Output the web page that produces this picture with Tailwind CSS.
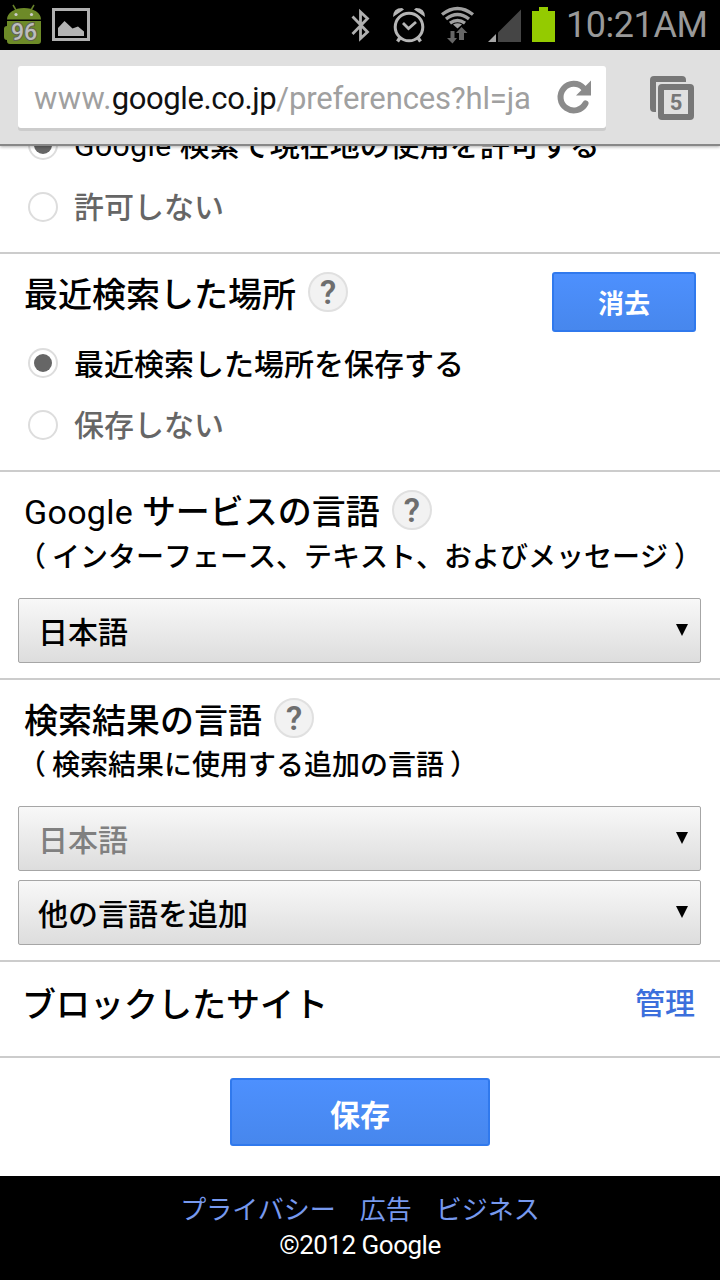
<!DOCTYPE html>
<html lang="ja">
<head>
    <meta charset="UTF-8">
    <meta name="viewport" content="width=device-width, initial-scale=1.0">
    <title>検索設定</title>
    <script src="https://cdn.jsdelivr.net/npm/@tailwindcss/browser@4"></script>
</head>
<body class="w-[720px] h-[1280px] overflow-hidden flex flex-col bg-white text-black font-['Roboto','Noto_Sans_CJK_JP',sans-serif]">
    <!-- Status bar -->
    <div class="h-[50px] shrink-0 bg-black flex items-start">
        <svg class="shrink-0" width="100" height="50" viewBox="0 0 100 50">
            <path d="M13 5l3 5M34 5l-3 5" stroke="#66802a" stroke-width="1.5"/>
            <path d="M7 19.500a17 11.500 0 0 1 34 0z" fill="#6d8a28"/>
            <path d="M7 21h34v20a3 3 0 0 1-3 3H10a3 3 0 0 1-3-3v-1q-3 0-3-3v-8q0-3 3-3z" fill="#6d8a28"/>
            <circle cx="16" cy="14.500" r="1.600" fill="#ccc"/>
            <circle cx="31.500" cy="14.500" r="1.600" fill="#ccc"/>
            <text x="24" y="39.500" text-anchor="middle" font-family="Roboto" font-weight="500" font-size="23" fill="#bdbdbd" stroke="#5f6250" stroke-width="2" paint-order="stroke">96</text>
            <rect x="53.500" y="9.500" width="35" height="30" fill="none" stroke="#b0b0b0" stroke-width="3"/>
            <path d="M58 36v-8l6.500-7 8 7.500 5.500-2 6 5v4.500z" fill="#b3b3b3"/>
        </svg>
        <div class="flex-1"></div>
        <svg class="shrink-0" width="220" height="50" viewBox="340 0 220 50">
            <path d="M352.500 16.500l15 15.500-7 6.500V12l7 6.500-15 15.500" fill="none" stroke="#b0b0b0" stroke-width="2.800"/>
            <circle cx="409" cy="27" r="13.800" fill="none" stroke="#b5b5b5" stroke-width="3"/>
            <path d="M403 23l5.500 5.500 7.500-6.500" fill="none" stroke="#b5b5b5" stroke-width="2.800"/>
            <path d="M393 17q0-9 9-9l2 1.500zM425 17q0-9-9-9l-2 1.500z" fill="#b5b5b5"/>
            <path d="M400.500 37l-3 4.500M417.500 37l3 4.500" stroke="#b5b5b5" stroke-width="3.400"/>
            <g fill="none" stroke="#a0a0a0" stroke-width="3.400">
                <path d="M442 14.500q15.500-12 31 0"/>
                <path d="M446 19q11.500-9 23 0"/>
                <path d="M450 23.200q7.500-5.500 15 0"/>
            </g>
            <path d="M453 24.500q4.500-2.500 9 0l-4.500 4z" fill="#a0a0a0"/>
            <path d="M450.500 31h4v7h2.500l-4.500 5.500-5.500-5.500h3.500zM459 40v-7h-3l5.500-6 6 6h-3.500v7z" fill="#666"/>
            <path d="M488 42l8-8v8z" fill="#a5a5a5"/>
            <path d="M498 42V32.500L521 9.500V42z" fill="#454545"/>
            <path d="M532 42V11h7V7h9v4h7v31z" fill="#94cb00"/>
        </svg>
        <div class="w-[160px] pl-[6px] pt-[2px] text-[36px] leading-[47px] font-normal tracking-[-0.45px] text-[#999999] whitespace-nowrap">10:21AM</div>
    </div>

    <!-- Browser toolbar -->
    <header class="h-24 shrink-0 bg-[#e0e0e0] border-b-2 border-[#888888] pt-4 pl-[18px] flex items-start shadow-[0_1px_3px_rgba(0,0,0,0.3)] z-10">
        <div class="w-[588px] h-[62px] bg-white rounded-[3px] shadow-[0_3px_0_#cccccc] flex items-center pl-4 text-[#a0a0a0] whitespace-nowrap">
            <div class="w-[520px] text-[31px] leading-[62px] pt-1"><span class="tracking-[0.4px]">www.</span><span class="tracking-[-0.4px] text-[#111111]">google.co.jp</span><span class="tracking-[-0.12px]">/preferences?hl=ja</span></div>
            <svg width="38" height="38" viewBox="554 79 38 38">
                <path d="M585.500 104.500a13.300 13.300 0 1 1 -2-15.500" fill="none" stroke="#8b8b8b" stroke-width="6" stroke-linecap="round"/>
                <path d="M591 81.500v15h-15z" fill="#8b8b8b"/>
            </svg>
        </div>
        <svg class="ml-[44px] mt-[10px]" width="44" height="44" viewBox="0 0 44 44">
            <path d="M6 36H4a4 4 0 0 1-4-4V4a4 4 0 0 1 4-4h28a4 4 0 0 1 4 4v2H6z" fill="#777"/>
            <rect x="8" y="8" width="36" height="36" rx="4" fill="#777"/>
            <rect x="14" y="14" width="24" height="24" fill="#e0e0e0"/>
            <path d="M7 36V7h29" fill="none" stroke="#e0e0e0" stroke-width="2"/>
            <text x="26" y="34" text-anchor="middle" font-family="Roboto" font-weight="700" font-size="22" fill="#777">5</text>
        </svg>
    </header>

    <main class="flex-1 min-h-0 overflow-hidden font-medium">
        <!-- Location -->
        <section class="-mt-8 h-[140px] border-b-2 border-[#cccccc] pl-7 text-[30px]">
            <div class="h-[62px] flex items-center gap-4">
                <span class="size-[30px] rounded-full border-2 border-[#dddddd] flex items-center justify-center"><span class="size-[18px] rounded-full bg-[#666666]"></span></span>
                <span class="pt-px"><span class="font-normal tracking-[0.5px]">Google </span>検索で現在地の使用を許可する</span>
            </div>
            <div class="h-[62px] flex items-center gap-4 text-[#666666]">
                <span class="size-[30px] rounded-full border-2 border-[#dddddd]"></span>
                <span class="pt-px">許可しない</span>
            </div>
        </section>

        <!-- Recent places -->
        <section class="h-[218px] border-b-2 border-[#cccccc] pt-[18px] text-[30px]">
            <div class="h-[60px] pl-6 pr-6 flex items-start">
                <h2 class="text-[34px] leading-[47px]">最近検索した場所</h2>
                <span class="ml-3 size-10 rounded-full border-2 border-[#e0e0e0] bg-[#f2f2f2] text-[#6e6e6e] text-[33px] leading-[37px] font-semibold text-center">?</span>
                <button class="ml-auto w-36 h-[60px] pt-1 rounded-[3px] border-2 border-[#3079ed] bg-linear-to-b from-[#4d90fe] to-[#4787ed] text-white text-[26px] font-bold">消去</button>
            </div>
            <div class="h-[62px] pl-7 flex items-center gap-4">
                <span class="size-[30px] rounded-full border-2 border-[#dddddd] flex items-center justify-center"><span class="size-[18px] rounded-full bg-[#666666]"></span></span>
                <span class="pt-0.5">最近検索した場所を保存する</span>
            </div>
            <div class="h-[62px] pl-7 flex items-center gap-4 text-[#666666]">
                <span class="size-[30px] rounded-full border-2 border-[#dddddd]"></span>
                <span class="pt-px">保存しない</span>
            </div>
        </section>

        <!-- Interface language -->
        <section class="h-[208px] border-b-2 border-[#cccccc] pt-[18px]">
            <div class="h-10 pl-6 flex items-start">
                <h2 class="text-[34px] leading-[45px]"><span class="font-normal tracking-[0.3px]">Google </span>サービスの言語</h2>
                <span class="ml-3 size-10 rounded-full border-2 border-[#e0e0e0] bg-[#f2f2f2] text-[#6e6e6e] text-[33px] leading-[37px] font-semibold text-center">?</span>
            </div>
            <p class="h-[68px] pl-6 text-[28px] leading-[55px] whitespace-nowrap [font-kerning:none]"><span class="inline-block w-7 -indent-[6px]">（</span>インターフェース、テキスト、およびメッセージ<span class="inline-block w-7 indent-[6px]">）</span></p>
            <div class="ml-[18px] w-[683px] h-[65px] border border-[#a6a6a6] rounded-[2px] bg-linear-to-b from-[#f8f8f8] to-[#dddddd] pl-[19px] pr-3 flex items-center justify-between text-[30px]">
                <span class="pt-[3px]">日本語</span>
                <svg class="mb-0.5" width="12" height="12" viewBox="0 0 12 12"><path d="M0 0h12L6 12z"/></svg>
            </div>
        </section>

        <!-- Result language -->
        <section class="h-[282px] border-b-2 border-[#cccccc] pt-[18px]">
            <div class="h-10 pl-6 flex items-start">
                <h2 class="text-[34px] leading-[47px]">検索結果の言語</h2>
                <span class="ml-3 size-10 rounded-full border-2 border-[#e0e0e0] bg-[#f2f2f2] text-[#6e6e6e] text-[33px] leading-[37px] font-semibold text-center">?</span>
            </div>
            <p class="h-[68px] pl-6 text-[28px] leading-[55px] whitespace-nowrap [font-kerning:none]"><span class="inline-block w-7 -indent-[6px]">（</span>検索結果に使用する追加の言語<span class="inline-block w-7 indent-[6px]">）</span></p>
            <div class="ml-[18px] w-[683px] h-[65px] border border-[#a6a6a6] rounded-[2px] bg-linear-to-b from-[#f8f8f8] to-[#dddddd] pl-[19px] pr-3 flex items-center justify-between text-[30px]">
                <span class="pt-[3px] text-[#808080]">日本語</span>
                <svg class="mb-0.5" width="12" height="12" viewBox="0 0 12 12"><path d="M0 0h12L6 12z"/></svg>
            </div>
            <div class="mt-[9px] ml-[18px] w-[683px] h-[65px] border border-[#a6a6a6] rounded-[2px] bg-linear-to-b from-[#f8f8f8] to-[#dddddd] pl-[19px] pr-3 flex items-center justify-between text-[30px]">
                <span class="pt-[3px]">他の言語を追加</span>
                <svg class="mb-0.5" width="12" height="12" viewBox="0 0 12 12"><path d="M0 0h12L6 12z"/></svg>
            </div>
        </section>

        <!-- Blocked sites -->
        <section class="h-24 border-b-2 border-[#cccccc] pl-[22px] pr-[25px] flex justify-between">
            <h2 class="text-[34px] leading-[87px]">ブロックしたサイト</h2>
            <a href="#" class="text-[30px] leading-[84px] text-[#3c6fdc]">管理</a>
        </section>

        <div class="pt-5 flex justify-center">
            <button class="w-[260px] h-[68px] pt-[7px] rounded-[3px] border-2 border-[#3079ed] bg-linear-to-b from-[#4d90fe] to-[#4787ed] text-white text-[30px] font-bold">保存</button>
        </div>
    </main>

    <footer class="h-[104px] shrink-0 bg-black pt-4 text-[26px] leading-9 text-center">
        <nav class="flex justify-center gap-6 text-[#7799ee]">
            <a href="#">プライバシー</a>
            <a href="#">広告</a>
            <a href="#">ビジネス</a>
        </nav>
        <p class="text-white tracking-[-0.5px] leading-[34px]">©2012 Google</p>
    </footer>
</body>
</html>
